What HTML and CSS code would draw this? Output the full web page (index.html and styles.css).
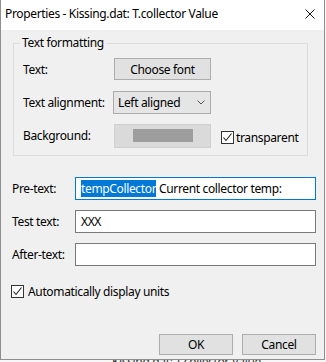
FILE: index.html
```html
<!DOCTYPE html>
<html lang="en">
<head>
  <meta charset="UTF-8" />
  <title>Properties - Kissing.dat: T.collector Value</title>
  <link rel="stylesheet" href="styles.css">
</head>
<body>
<div class="window">
  <div class="titlebar">
    <span class="title">Properties - Kissing.dat: T.collector Value</span>
    <svg class="close" width="10" height="10" viewBox="0 0 10 10">
      <path d="M0.5 0.5 L9.5 9.5 M9.5 0.5 L0.5 9.5" stroke="#1a1a1a" stroke-width="1" fill="none" />
    </svg>
  </div>
  <div class="content">
    <fieldset class="group">
      <legend>Text formatting</legend>
      <div class="row">
        <span class="lbl">Text:</span>
        <button class="btn">Choose font</button>
      </div>
      <div class="row">
        <span class="lbl">Text alignment:</span>
        <div class="select">
          <span>Left aligned</span>
          <svg width="8" height="5" viewBox="0 0 8 5">
            <path d="M0.5 0.5 L4 4 L7.5 0.5" stroke="#555" stroke-width="1" fill="none" />
          </svg>
        </div>
      </div>
      <div class="row bg-row">
        <span class="lbl">Background:</span>
        <button class="btn color-btn"><span class="swatch"></span></button>
        <label class="check">
          <span class="box">
            <svg width="11" height="11" viewBox="0 0 11 11">
              <path d="M1.5 5.5 L4 8.5 L9.5 1.5" stroke="#222" stroke-width="1.1" fill="none" />
            </svg>
          </span>
          transparent
        </label>
      </div>
    </fieldset>

    <div class="fields">
      <div class="field">
        <span class="flbl">Pre-text:</span>
        <div class="input focused"><span class="sel">tempCollector</span> Current collector temp:</div>
      </div>
      <div class="field">
        <span class="flbl">Test text:</span>
        <div class="input">XXX</div>
      </div>
      <div class="field">
        <span class="flbl">After-text:</span>
        <div class="input"></div>
      </div>
    </div>

    <label class="check units">
      <span class="box">
        <svg width="11" height="11" viewBox="0 0 11 11">
          <path d="M1.5 5.5 L4 8.5 L9.5 1.5" stroke="#222" stroke-width="1.1" fill="none" />
        </svg>
      </span>
      Automatically display units
    </label>

    <div class="actions">
      <button class="btn action">OK</button>
      <button class="btn action">Cancel</button>
    </div>
  </div>
</div>
<div class="behind">Kissing.dat: T.collector Value</div>
</body>
</html>
```

FILE: styles.css
```css
html, body {
  margin: 0;
  height: 100%;
  overflow: hidden;
}

body {
  font-family: 'Noto Sans', 'Open Sans', sans-serif;
  font-size: 12px;
  letter-spacing: -0.35px;
  color: #000;
  background: #f7f7f7;
}

.window {
  position: relative;
  z-index: 1;
  width: 323px;
  height: 359px;
  border: 1px solid #8e8e8e;
  border-top: none;
  background: #f0f0f0;
  display: flex;
  flex-direction: column;
}

.titlebar {
  height: 30px;
  background: #fff;
  display: flex;
  align-items: center;
  justify-content: space-between;
  padding: 0 9px 4px 4px;
  box-sizing: border-box;
}

.title {
  font-size: 12px;
}

.close {
  display: block;
  margin-top: 2px;
}

.content {
  flex: 1;
  display: flex;
  flex-direction: column;
  padding: 5px 8px 4px 10px;
}

.group {
  margin: 0 9px 0 2px;
  padding: 7px 9px 8px 9px;
  border: 1px solid #dcdcdc;
  display: flex;
  flex-direction: column;
  gap: 11px;
}

.group legend {
  padding: 0 2px;
  margin-left: -3px;
  line-height: 16px;
}

.row {
  display: flex;
  align-items: center;
  height: 22px;
}

.bg-row {
  height: 23px;
}

.lbl {
  width: 91px;
  flex: none;
}

.btn {
  font-family: inherit;
  font-size: 12px;
  letter-spacing: inherit;
  color: #000;
  background: #e1e1e1;
  border: 1px solid #adadad;
  border-radius: 0;
  padding: 0;
  margin: 0;
  height: 22px;
  width: 97px;
}

.select {
  box-sizing: border-box;
  width: 98px;
  height: 23px;
  margin-left: -1px;
  background: #e5e5e5;
  border: 1px solid #acacac;
  display: flex;
  align-items: center;
  justify-content: space-between;
  padding: 0 5px 0 4px;
}

.select svg {
  display: block;
}

.color-btn {
  height: 24px;
  background: #dadada;
  border-color: #d0d0d0;
  display: flex;
  align-items: center;
  justify-content: center;
}

.swatch {
  width: 60px;
  height: 13px;
  background: #9d9d9d;
}

.check {
  display: flex;
  align-items: center;
  gap: 2px;
}

.bg-row .check {
  margin-left: 10px;
  margin-top: 4px;
}

.box {
  width: 11px;
  height: 11px;
  border: 1px solid #333;
  background: #fff;
  display: block;
}

.box svg {
  display: block;
}

.fields {
  margin-top: 21px;
  display: flex;
  flex-direction: column;
  gap: 10px;
}

.field {
  display: flex;
  align-items: center;
  margin-left: 1px;
}

.flbl {
  width: 63px;
  flex: none;
}

.input {
  box-sizing: border-box;
  flex: 1;
  height: 23px;
  background: #fff;
  border: 1px solid #7a7a7a;
  padding: 0 5px;
  line-height: 21px;
  white-space: nowrap;
}

.input.focused {
  border-color: #0078d7;
}

.sel {
  background: #0078d7;
  color: #fff;
}

.units {
  margin-top: 17px;
  gap: 4px;
}

.actions {
  margin-top: auto;
  display: flex;
  justify-content: flex-end;
  gap: 9px;
}

.action {
  width: 74px;
  height: 21px;
}

.behind {
  margin-left: 112px;
  line-height: 4px;
  color: #333;
  font-size: 12px;
}
```
